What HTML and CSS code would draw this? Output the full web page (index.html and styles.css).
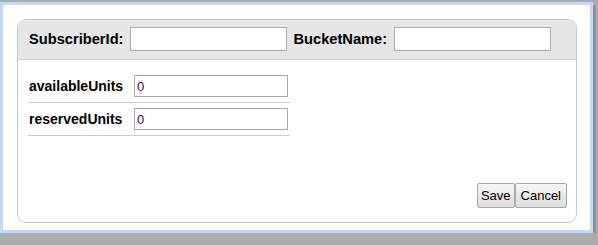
FILE: index.html
```html
<!DOCTYPE html>
<html>
  <head>
    <link rel="stylesheet" href="styles.css">
  </head>
  <body>
    <div class="dialog">
      <form class="panel" name="bucket-form">
        <div class="panelHead">
          <label class="headLabel" for="subscriberId">SubscriberId:</label>
          <input class="headInput" id="subscriberId" name="subscriberId" value="">
          <label class="headLabel" for="bucketName">BucketName:</label>
          <input class="headInput" id="bucketName" name="bucketName" value="">
        </div>
        <div class="panelBody">
          <table class="units" cellspacing="0" cellpadding="0">
            <tr>
              <td class="unitLabel">availableUnits</td>
              <td class="unitCell"><input class="unitInput" name="availableUnits" value="0"></td>
            </tr>
            <tr>
              <td class="unitLabel">reservedUnits</td>
              <td class="unitCell"><input class="unitInput" name="reservedUnits" value="0"></td>
            </tr>
          </table>
        </div>
        <div class="panelFoot">
          <input type="button" class="btn" value="Save">
          <input type="button" class="btn" value="Cancel">
        </div>
      </form>
    </div>
  </body>
</html>
```

FILE: styles.css
```css
* {
  box-sizing: border-box;
}
body {
  margin: 0;
  padding-top: 2px;
  background-color: #ababab;
  font-family: "Liberation Sans", Arial, sans-serif;
  color: #000;
}
.dialog {
  width: 593px;
  height: 231px;
  background-color: #fff;
  border: 3px solid #c3d7f7;
  padding: 14px 12px 8px 14px;
  box-shadow: 3px 3px 0 #909090;
}
.panel {
  margin: 0;
  width: 560px;
  height: 204px;
  border: 1px solid #c9c9c9;
  border-radius: 9px;
  display: flex;
  flex-direction: column;
  overflow: hidden;
}
.panelHead {
  height: 40px;
  background-color: #e6e6e6;
  border-bottom: 1px solid #cfcfcf;
  display: flex;
  align-items: center;
  padding: 0 0 1px 11px;
}
.headLabel {
  font-size: 14.67px;
  font-weight: bold;
  margin-right: 7px;
}
.headInput {
  width: 157px;
  height: 24px;
  border: 1px solid #a9a9a9;
  background-color: #fff;
  margin: 0 6px 0 0;
  font-family: inherit;
  font-size: 13px;
  padding: 0 2px;
}
.panelBody {
  flex: 1;
  padding: 10px 0 0 10px;
}
.units {
  border-collapse: collapse;
}
.units td {
  border-bottom: 1px solid #cdcdcd;
  padding: 5px 0;
}
.unitLabel {
  width: 106px;
  padding-left: 1px !important;
  font-size: 14px;
  font-weight: bold;
}
.unitCell {
  padding-right: 2px !important;
}
.unitInput {
  display: block;
  width: 154px;
  height: 22px;
  border: 1px solid #a9a9a9;
  margin: 0;
  padding: 0 2px;
  font-family: inherit;
  font-size: 13px;
  color: #330a55;
}
.panelFoot {
  display: flex;
  justify-content: flex-end;
  padding: 0 9px 14px 0;
}
.btn {
  height: 25px;
  margin: 0;
  padding: 0 3px;
  border: 1px solid #a7a7a7;
  border-radius: 2px;
  background: linear-gradient(#f6f6f6, #dddddd);
  font-family: inherit;
  font-size: 13px;
  color: #000;
}
.btn + .btn {
  padding: 0 5px;
}
```
